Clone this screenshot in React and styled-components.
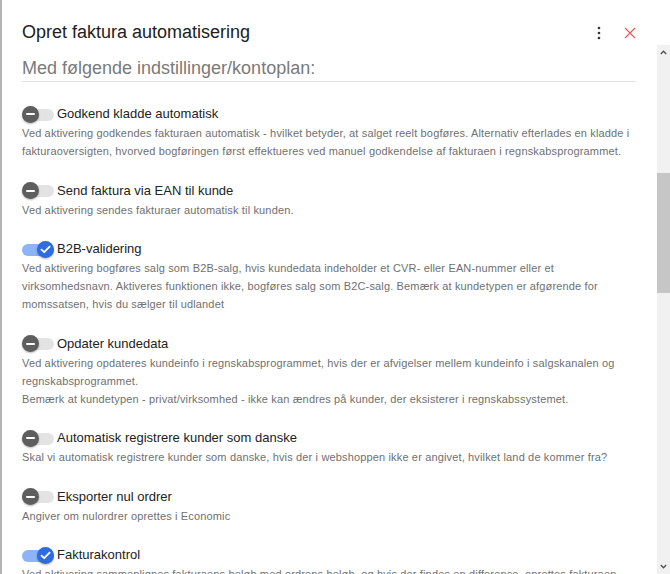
import React from 'react'
import styled, { createGlobalStyle } from 'styled-components'

const Global = createGlobalStyle`
  html, body { margin: 0; padding: 0; background: #fff; }
  body { font-family: "Liberation Sans", Arial, sans-serif; }
`

const items = [
  {
    label: 'Godkend kladde automatisk',
    on: false,
    text: 'Ved aktivering godkendes fakturaen automatisk - hvilket betyder, at salget reelt bogføres. Alternativ efterlades en kladde i fakturaoversigten, hvorved bogføringen først effektueres ved manuel godkendelse af fakturaen i regnskabsprogrammet.',
  },
  {
    label: 'Send faktura via EAN til kunde',
    on: false,
    text: 'Ved aktivering sendes fakturaer automatisk til kunden.',
  },
  {
    label: 'B2B-validering',
    on: true,
    text: 'Ved aktivering bogføres salg som B2B-salg, hvis kundedata indeholder et CVR- eller EAN-nummer eller et virksomhedsnavn. Aktiveres funktionen ikke, bogføres salg som B2C-salg. Bemærk at kundetypen er afgørende for momssatsen, hvis du sælger til udlandet',
  },
  {
    label: 'Opdater kundedata',
    on: false,
    text: [
      'Ved aktivering opdateres kundeinfo i regnskabsprogrammet, hvis der er afvigelser mellem kundeinfo i salgskanalen og regnskabsprogrammet.',
      'Bemærk at kundetypen - privat/virksomhed - ikke kan ændres på kunder, der eksisterer i regnskabssystemet.',
    ],
  },
  {
    label: 'Automatisk registrere kunder som danske',
    on: false,
    text: 'Skal vi automatisk registrere kunder som danske, hvis der i webshoppen ikke er angivet, hvilket land de kommer fra?',
  },
  {
    label: 'Eksporter nul ordrer',
    on: false,
    text: 'Angiver om nulordrer oprettes i Economic',
  },
  {
    label: 'Fakturakontrol',
    on: true,
    text: 'Ved aktivering sammenlignes fakturaens beløb med ordrens beløb, og hvis der findes en difference, oprettes fakturaen ikke, men sendes til kontrol.',
  },
]

const Dialog = styled.div`
  width: 670px;
  height: 574px;
  box-sizing: border-box;
  border-left: 2px solid #b4b4b4;
  background: #fff;
  display: flex;
  flex-direction: column;
  overflow: hidden;
`

const Header = styled.div`
  height: 45px;
  box-sizing: border-box;
  padding: 20px 34px 0 20px;
  display: flex;
  align-items: center;
  flex-shrink: 0;
`

const Title = styled.div`
  flex: 1;
  font-size: 18px;
  line-height: 21px;
  color: #212121;
`

const Actions = styled.div`
  display: flex;
  align-items: center;
  gap: 23px;
`

const IconButton = styled.span`
  display: flex;
  align-items: center;
  justify-content: center;
`

const Body = styled.div`
  flex: 1;
  min-height: 0;
  display: flex;
`

const Scroller = styled.div`
  flex: 1;
  overflow: hidden;
  padding: 0 21px 0 20px;
`

const Subtitle = styled.div`
  margin-top: 13px;
  padding-bottom: 2px;
  border-bottom: 1px solid #e2e2e2;
  font-size: 18px;
  line-height: 21px;
  color: #7a7a7a;
`

const List = styled.div`
  margin-top: 21px;
`

const Item = styled.div`
  margin-bottom: 19.5px;
`

const Row = styled.div`
  height: 21px;
  display: flex;
  align-items: center;
`

const Label = styled.span`
  font-size: 13px;
  color: #222;
  margin-left: 3px;
`

const Track = styled.span`
  position: relative;
  width: 32px;
  height: 12px;
  border-radius: 6px;
  background: ${p => (p.$on ? '#8db4f7' : '#e3e3e3')};
  display: inline-block;
  margin-top: 2px;
`

const Thumb = styled.span`
  position: absolute;
  top: -3px;
  left: ${p => (p.$on ? '15px' : '0')};
  width: 17px;
  height: 17px;
  border-radius: 50%;
  background: ${p => (p.$on ? '#2f6be3' : '#5e5e5e')};
  box-shadow: 0 1px 2px rgba(0, 0, 0, 0.3);
  display: flex;
  align-items: center;
  justify-content: center;
`

const Minus = styled.span`
  width: 9px;
  height: 2px;
  background: #fff;
  border-radius: 1px;
`

const Desc = styled.div`
  font-size: 11px;
  line-height: 18px;
  letter-spacing: 0.15px;
  color: #707070;
`

const ScrollBar = styled.div`
  width: 13px;
  background: #f1f1f1;
  display: flex;
  flex-direction: column;
  flex-shrink: 0;
`

const Arrow = styled.div`
  height: 15px;
  display: flex;
  align-items: center;
  justify-content: center;
`

const Rail = styled.div`
  flex: 1;
  padding-top: 113px;
`

const Handle = styled.div`
  height: 120px;
  background: #c6c6c6;
`

const Toggle = ({ on }) => (
  <Track $on={on}>
    <Thumb $on={on}>
      {on ? (
        <svg width="11" height="9" viewBox="0 0 11 9">
          <path d="M1.5 4.6 L4.2 7.2 L9.6 1.6" fill="none" stroke="#fff" strokeWidth="1.8" strokeLinecap="round" strokeLinejoin="round" />
        </svg>
      ) : (
        <Minus />
      )}
    </Thumb>
  </Track>
)

const App = () => {
  return (
    <Dialog>
      <Global />
      <Header>
        <Title>Opret faktura automatisering</Title>
        <Actions>
          <IconButton>
            <svg width="4" height="14" viewBox="0 0 4 14">
              <circle cx="2" cy="2" r="1.3" fill="#333" />
              <circle cx="2" cy="7" r="1.3" fill="#333" />
              <circle cx="2" cy="12" r="1.3" fill="#333" />
            </svg>
          </IconButton>
          <IconButton>
            <svg width="12" height="12" viewBox="0 0 12 12">
              <path d="M1 1 L11 11 M11 1 L1 11" stroke="#ee5a5a" strokeWidth="1.2" />
            </svg>
          </IconButton>
        </Actions>
      </Header>
      <Body>
        <Scroller>
          <Subtitle>Med følgende indstillinger/kontoplan:</Subtitle>
          <List>
            {items.map(item => (
              <Item key={item.label}>
                <Row>
                  <Toggle on={item.on} />
                  <Label>{item.label}</Label>
                </Row>
                {Array.isArray(item.text)
                  ? item.text.map(t => <Desc key={t}>{t}</Desc>)
                  : <Desc>{item.text}</Desc>}
              </Item>
            ))}
          </List>
        </Scroller>
        <ScrollBar>
          <Arrow>
            <svg width="7" height="5" viewBox="0 0 7 5">
              <path d="M0.8 4 L3.5 1.2 L6.2 4" fill="none" stroke="#505050" strokeWidth="1.3" />
            </svg>
          </Arrow>
          <Rail>
            <Handle />
          </Rail>
          <Arrow>
            <svg width="7" height="5" viewBox="0 0 7 5">
              <path d="M0.8 1 L3.5 3.8 L6.2 1" fill="none" stroke="#505050" strokeWidth="1.3" />
            </svg>
          </Arrow>
        </ScrollBar>
      </Body>
    </Dialog>
  )
}

export default App
